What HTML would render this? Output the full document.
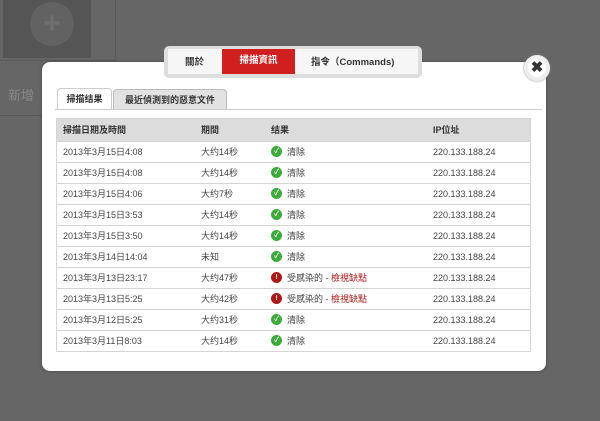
<html><head><style>
body{margin:0;width:600px;height:421px;background:#666;position:relative;overflow:hidden;font-family:"Liberation Sans","Noto Sans CJK TC",sans-serif;}
.abs{position:absolute}
table{border-collapse:collapse;width:473px;font-size:9px;color:#444}
td{height:21px;border-top:1px solid #d4d4d4;padding:0 0 0 6px;white-space:nowrap;vertical-align:middle;line-height:12px}
th{height:22px;background:#dcdcdc;text-align:left;padding:0 0 0 6px;font-size:9px;color:#333;font-weight:bold}
.ok,.bad{display:inline-block;width:11px;height:11px;border-radius:50%;vertical-align:top;margin-right:5px;color:#fff;font-size:7px;text-align:center;line-height:11px;font-weight:bold}
.ok{background:#3cab3c}.bad{background:#b01818}
.r{color:#b01818}
</style></head><body>
<div class="abs" style="left:3px;top:0;width:88px;height:58px;background:#555"></div>
<div class="abs" style="left:30px;top:2px;width:44px;height:44px;border-radius:50%;background:#626262;color:#707070;font-size:30px;text-align:center;line-height:44px;font-weight:bold">+</div>
<div class="abs" style="left:115px;top:0;width:1px;height:60px;background:#5c5c5c"></div>
<div class="abs" style="left:0;top:60px;width:116px;height:1px;background:#5a5a5a"></div>
<div class="abs" style="left:0;top:115px;width:42px;height:1px;background:#5a5a5a"></div>
<div class="abs" style="left:8px;top:85px;color:#888;font-size:13px">新增</div>
<div class="abs" style="left:42px;top:62px;width:504px;height:309px;background:#fff;border-radius:8px;box-shadow:0 0 3px #444"></div>
<div class="abs" style="left:164px;top:46px;width:258px;height:32px;background:#ddd;border-radius:5px"></div>
<div class="abs" style="left:168px;top:49px;width:250px;height:25px;background:#f6f6f6;font-size:9.5px;font-weight:bold;color:#333">
<span class="abs" style="left:17px;top:5px">關於</span>
<span class="abs" style="left:54px;top:0;width:73px;height:25px;background:#d11f1f;color:#fff;text-align:center;line-height:23px">掃描資訊</span>
<span class="abs" style="left:143px;top:5px">指令（Commands)</span>
</div>
<div class="abs" style="left:524px;top:55px;width:26px;height:26px;border-radius:50%;background:#eee;box-shadow:0 0 2px #888"></div>
<div class="abs" style="left:528px;top:59px;width:18px;height:18px;border-radius:50%;background:#fff;font-size:15px;line-height:18px;text-align:center;font-weight:bold;color:#333">✖</div>
<div class="abs" style="left:57px;top:88px;width:53px;height:21px;border:1px solid #ccc;border-bottom:none;border-radius:4px 4px 0 0;background:#fff;font-size:9px;font-weight:bold;text-align:center;line-height:20px;color:#333">掃描结果</div>
<div class="abs" style="left:113px;top:89px;width:112px;height:20px;border:1px solid #bbb;border-bottom:none;border-radius:4px 4px 0 0;background:#e2e2e2;font-size:9px;font-weight:bold;text-align:center;line-height:20px;color:#333">最近偵測到的惡意文件</div>
<div class="abs" style="left:55px;top:109px;width:487px;height:1px;background:#ccc"></div>
<div class="abs" style="left:56px;top:118px;border:1px solid #d4d4d4">
<table>
<tr><th style="width:132px">掃描日期及時間</th><th style="width:64px">期間</th><th style="width:156px">结果</th><th>IP位址</th></tr>
<tr><td>2013年3月15日4:08</td><td>大约14秒</td><td><span class="ok">✓</span>清除</td><td>220.133.188.24</td></tr>
<tr><td>2013年3月15日4:08</td><td>大约14秒</td><td><span class="ok">✓</span>清除</td><td>220.133.188.24</td></tr>
<tr><td>2013年3月15日4:06</td><td>大约7秒</td><td><span class="ok">✓</span>清除</td><td>220.133.188.24</td></tr>
<tr><td>2013年3月15日3:53</td><td>大约14秒</td><td><span class="ok">✓</span>清除</td><td>220.133.188.24</td></tr>
<tr><td>2013年3月15日3:50</td><td>大约14秒</td><td><span class="ok">✓</span>清除</td><td>220.133.188.24</td></tr>
<tr><td>2013年3月14日14:04</td><td>未知</td><td><span class="ok">✓</span>清除</td><td>220.133.188.24</td></tr>
<tr><td>2013年3月13日23:17</td><td>大约47秒</td><td><span class="bad">!</span>受感染的 - <span class="r">檢視缺點</span></td><td>220.133.188.24</td></tr>
<tr><td>2013年3月13日5:25</td><td>大约42秒</td><td><span class="bad">!</span>受感染的 - <span class="r">檢視缺點</span></td><td>220.133.188.24</td></tr>
<tr><td>2013年3月12日5:25</td><td>大约31秒</td><td><span class="ok">✓</span>清除</td><td>220.133.188.24</td></tr>
<tr><td>2013年3月11日8:03</td><td>大约14秒</td><td><span class="ok">✓</span>清除</td><td>220.133.188.24</td></tr>
</table></div>
</body></html>
